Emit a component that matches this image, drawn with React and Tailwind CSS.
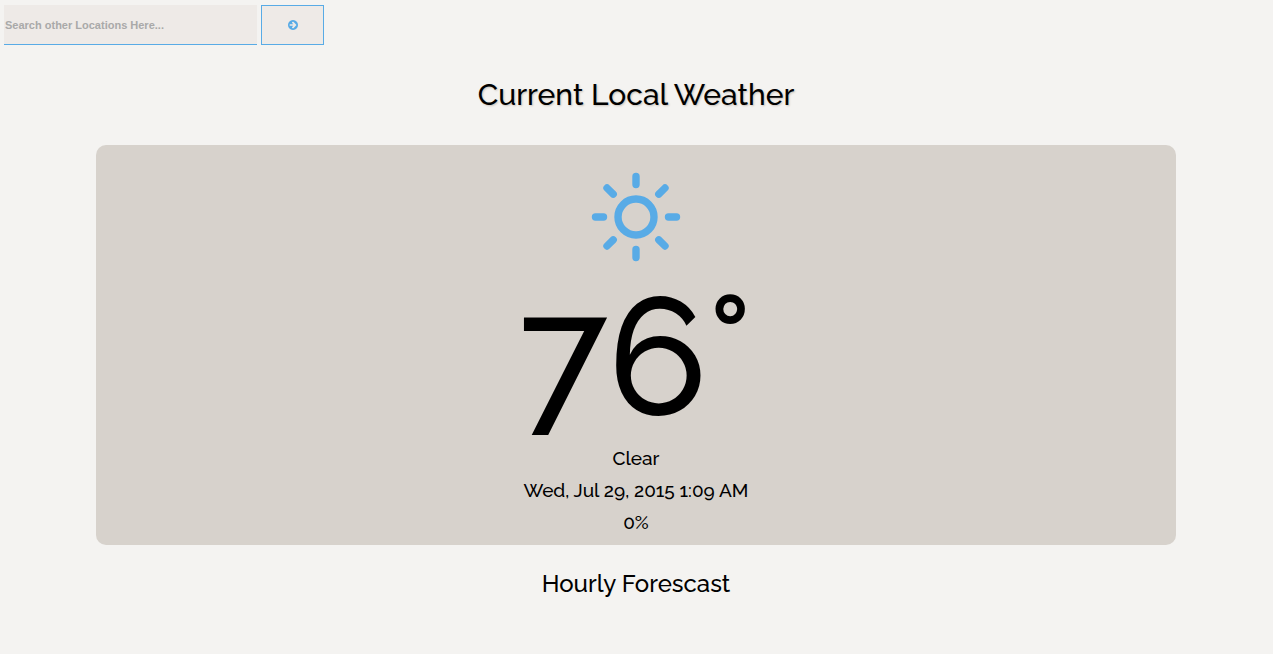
function SunIcon() {
  return (
    <svg
      viewBox="-45 -45 90 90"
      className="size-[90px]"
      fill="none"
      stroke="#58abe6"
      strokeWidth="7.4"
      strokeLinecap="round"
      aria-hidden="true"
    >
      <circle r="18" />
      <path d="M0-40.5V-32.5M0 40.5V32.5M-40.5 0H-32.5M40.5 0H32.5M-29-29L-22.8-22.8M29-29L22.8-22.8M-29 29L-22.8 22.8M29 29L22.8 22.8" />
    </svg>
  );
}

function ArrowCircleIcon() {
  return (
    <svg viewBox="128 128 1536 1536" className="size-[10px]" fill="currentColor" aria-hidden="true">
      <path d="M1413 896q0-27-18-45l-362-362-91-91q-18-18-45-18t-45 18l-91 91q-18 18-18 45t18 45l189 189h-502q-26 0-45 19t-19 45v128q0 26 19 45t45 19h502l-189 189q-19 19-19 45t19 45l91 91q18 18 45 18t45-18l91-91 362-362q18-18 18-45zm251 0q0 209-103 385.5t-279.5 279.5-385.5 103-385.5-103-279.5-279.5-103-385.5 103-385.5 279.5-279.5 385.5-103 385.5 103 279.5 279.5 103 385.5z" />
    </svg>
  );
}

function SearchBar() {
  return (
    <form className="flex gap-1 px-1 pt-[5px]" onSubmit={(e) => e.preventDefault()}>
      <input
        type="text"
        aria-label="Search other locations"
        placeholder="Search other Locations Here..."
        className="h-10 w-[253px] border-b border-[#58abe6] bg-[#eeeae7] px-px font-['Liberation_Sans',Arial,sans-serif] text-[11px] font-bold outline-none placeholder:text-[#a9a9a9]"
      />
      <button
        type="submit"
        aria-label="Search"
        className="flex h-10 w-[63px] items-center justify-center border border-[#58abe6] bg-[#eeeae7] text-[#58abe6]"
      >
        <ArrowCircleIcon />
      </button>
    </form>
  );
}

export default function App() {
  return (
    <div className="min-h-screen bg-[#f4f3f1] font-[Raleway,Lato,sans-serif] font-medium text-black">
      <SearchBar />
      <main className="pr-[97px] pl-24 text-center">
        <h1 className="mt-7 text-[30px] leading-11 text-shadow-[1px_1px_2px_#c9c2ba]">
          Current Local Weather
        </h1>
        <section className="mt-7 flex flex-col items-center rounded-[10px] bg-[#d7d2cc] pt-[27px] pb-[7px]">
          <SunIcon />
          <p className="mt-5 mb-3 text-[165px] leading-[148px]">76°</p>
          <p className="text-[19px] leading-8">Clear</p>
          <p className="text-[19px] leading-8">Wed, Jul 29, 2015 1:09 AM</p>
          <p className="text-[19px] leading-8">0%</p>
        </section>
        <h2 className="mt-5 text-[24px] leading-[38px]">Hourly Forescast</h2>
      </main>
    </div>
  );
}
